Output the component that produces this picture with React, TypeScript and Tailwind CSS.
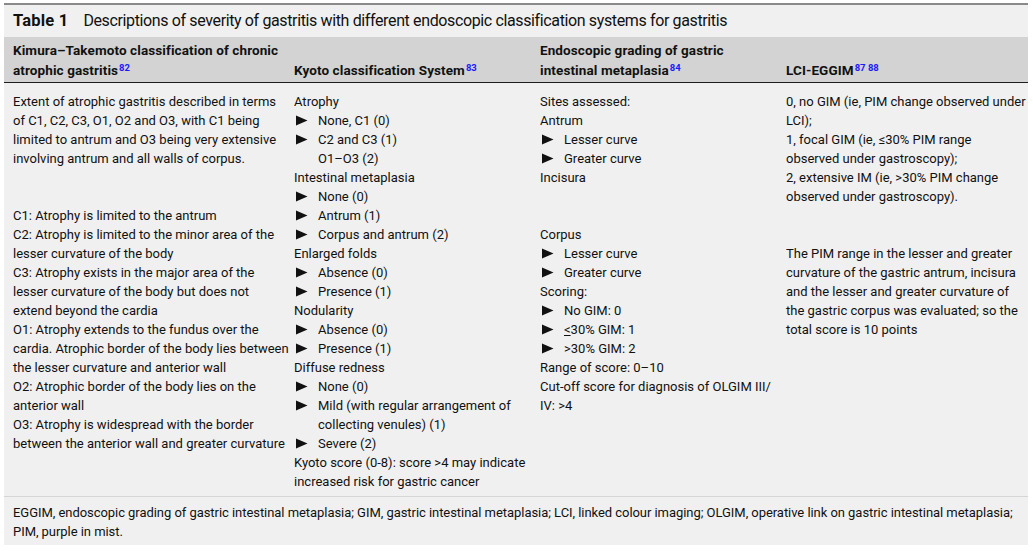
import React from "react";

const Tri = () => (
  <svg width="12" height="11" viewBox="0 0 12 11" className="shrink-0">
    <polygon points="0,0.5 11.5,5.5 0,10.5" fill="#111111" />
  </svg>
);

const Blank = () => <div className="h-[19px]" />;
const L = ({ children }: { children?: React.ReactNode }) => (
  <div className="h-[19px] whitespace-nowrap">{children}</div>
);
const B = ({ children }: { children?: React.ReactNode }) => (
  <div className="h-[19px] whitespace-nowrap flex items-center">
    <span className="w-[24px] pl-[2px] flex items-center">
      <Tri />
    </span>
    <span>{children}</span>
  </div>
);
const I = ({ children }: { children?: React.ReactNode }) => (
  <div className="h-[19px] whitespace-nowrap pl-[24px]">{children}</div>
);

const Sup = ({ children }: { children: React.ReactNode }) => (
  <sup className="text-[9.5px] font-bold text-[#1a1aff] relative -top-[4px] ml-[1px] tracking-[0px]">{children}</sup>
);

export default function App() {
  return (
    <div className="w-[1033px] h-[551px] bg-white font-['Roboto',sans-serif] text-[#111111] pt-[3px] pl-[4px]">
      <div className="w-[1024px] border-t-2 border-[#8a8a8a] bg-[#f0f0f0]">
        {/* title */}
        <div className="h-[32px] flex items-center pl-[9px] text-[16px]">
          <span className="font-bold mr-[15px] text-[16.5px] tracking-[0.2px]">Table 1</span>
          <span className="tracking-[-0.37px]">Descriptions of severity of gastritis with different endoscopic classification systems for gastritis</span>
        </div>
        {/* header */}
        <div className="grid grid-cols-[282px_246px_246px_250px] bg-[#d3d3d3] border-b-[1.5px] border-[#1e1e1e] text-[13.5px] font-bold leading-[20px] pt-[3px] pb-[2px] tracking-[0.1px]">
          <div className="pl-[9px]">
            <div className="whitespace-nowrap">Kimura–Takemoto classification of chronic</div>
            <div>atrophic gastritis<Sup>82</Sup></div>
          </div>
          <div className="pl-[8px] flex items-end">
            <div>Kyoto classification System<Sup>83</Sup></div>
          </div>
          <div className="pl-[8px]">
            <div>Endoscopic grading of gastric</div>
            <div>intestinal metaplasia<Sup>84</Sup></div>
          </div>
          <div className="pl-[8px] flex items-end">
            <div>LCI-EGGIM<Sup>87 88</Sup></div>
          </div>
        </div>
        {/* body */}
        <div className="grid grid-cols-[282px_246px_246px_250px] text-[13px] leading-[19px] pt-[9px] pb-[5px] tracking-[0px]">
          <div className="pl-[9px]">
            <L>Extent of atrophic gastritis described in terms</L>
            <L>of C1, C2, C3, O1, O2 and O3, with C1 being</L>
            <L>limited to antrum and O3 being very extensive</L>
            <L>involving antrum and all walls of corpus.</L>
            <Blank />
            <Blank />
            <L>C1: Atrophy is limited to the antrum</L>
            <L>C2: Atrophy is limited to the minor area of the</L>
            <L>lesser curvature of the body</L>
            <L>C3: Atrophy exists in the major area of the</L>
            <L>lesser curvature of the body but does not</L>
            <L>extend beyond the cardia</L>
            <L>O1: Atrophy extends to the fundus over the</L>
            <L>cardia. Atrophic border of the body lies between</L>
            <L>the lesser curvature and anterior wall</L>
            <L>O2: Atrophic border of the body lies on the</L>
            <L>anterior wall</L>
            <L>O3: Atrophy is widespread with the border</L>
            <L>between the anterior wall and greater curvature</L>
          </div>
          <div className="pl-[8px]">
            <L>Atrophy</L>
            <B>None, C1 (0)</B>
            <B>C2 and C3 (1)</B>
            <I>O1–O3 (2)</I>
            <L>Intestinal metaplasia</L>
            <B>None (0)</B>
            <B>Antrum (1)</B>
            <B>Corpus and antrum (2)</B>
            <L>Enlarged folds</L>
            <B>Absence (0)</B>
            <B>Presence (1)</B>
            <L>Nodularity</L>
            <B>Absence (0)</B>
            <B>Presence (1)</B>
            <L>Diffuse redness</L>
            <B>None (0)</B>
            <B>Mild (with regular arrangement of</B>
            <I>collecting venules) (1)</I>
            <B>Severe (2)</B>
            <L>Kyoto score (0-8): score &gt;4 may indicate</L>
            <L>increased risk for gastric cancer</L>
          </div>
          <div className="pl-[8px]">
            <L>Sites assessed:</L>
            <L>Antrum</L>
            <B>Lesser curve</B>
            <B>Greater curve</B>
            <L>Incisura</L>
            <Blank />
            <Blank />
            <L>Corpus</L>
            <B>Lesser curve</B>
            <B>Greater curve</B>
            <L>Scoring:</L>
            <B>No GIM: 0</B>
            <B><span className="underline">&lt;</span>30% GIM: 1</B>
            <B>&gt;30% GIM: 2</B>
            <L>Range of score: 0–10</L>
            <L>Cut-off score for diagnosis of OLGIM III/</L>
            <L>IV: &gt;4</L>
          </div>
          <div className="pl-[8px]">
            <L>0, no GIM (ie, PIM change observed under</L>
            <L>LCI);</L>
            <L>1, focal GIM (ie, ≤30% PIM range</L>
            <L>observed under gastroscopy);</L>
            <L>2, extensive IM (ie, &gt;30% PIM change</L>
            <L>observed under gastroscopy).</L>
            <Blank />
            <Blank />
            <L>The PIM range in the lesser and greater</L>
            <L>curvature of the gastric antrum, incisura</L>
            <L>and the lesser and greater curvature of</L>
            <L>the gastric corpus was evaluated; so the</L>
            <L>total score is 10 points</L>
          </div>
        </div>
        {/* footer */}
        <div className="border-t border-[#d6d6d6] pl-[9px] pt-[6px] pb-[4px] text-[13px] leading-[19px] tracking-[-0.05px]">
          <div className="whitespace-nowrap">EGGIM, endoscopic grading of gastric intestinal metaplasia; GIM, gastric intestinal metaplasia; LCI, linked colour imaging; OLGIM, operative link on gastric intestinal metaplasia;</div>
          <div>PIM, purple in mist.</div>
        </div>
      </div>
    </div>
  );
}
